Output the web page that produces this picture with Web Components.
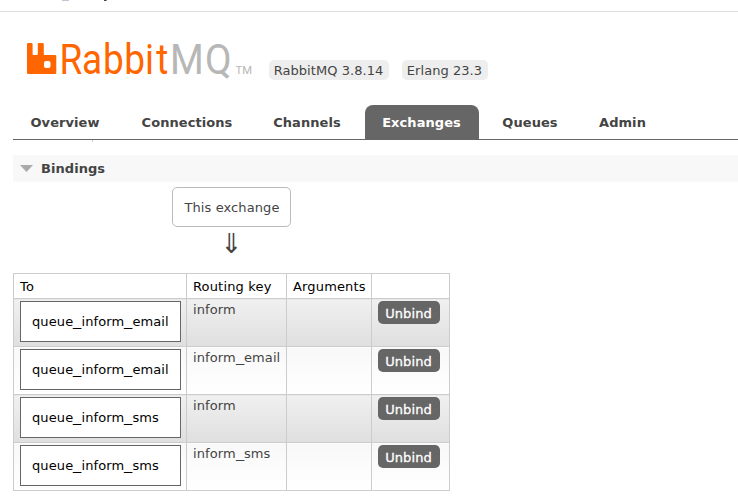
<!DOCTYPE html>
<html lang="en">
<head>
<meta charset="utf-8">
<title>RabbitMQ Management</title>
<style>
html,body{margin:0;background:#fff;overflow:hidden}
body{width:738px;height:501px;font:13px/17px "DejaVu Sans",sans-serif;color:#444}
</style>
</head>
<body>
<rmq-page></rmq-page>
<script>
const define = (name, html) => customElements.define(name, class extends HTMLElement {
  constructor() {
    super();
    this.attachShadow({mode: 'open'}).innerHTML = html;
  }
});

// Letter positions in page units, converted to the condensed coordinate system of the wordmark.
const xs = (scale, list) => list.map(x => (x / scale).toFixed(2)).join(' ');

define('rmq-logo', `
<style>:host{display:block;width:227px;height:64px}svg{display:block}</style>
<svg width="227" height="64" viewBox="26 26 227 64">
  <path fill="#f60" d="M28.300 43h3q1.300 0 1.300 1.300V54q0 1 1 1h3.200q1 0 1-1v-9.700q0-1.300 1.300-1.300h3.400q1.300 0 1.300 1.300V54q0 1 1 1h10.200q1.300 0 1.300 1.300V72.700q0 1.300-1.300 1.300H28.300q-1.300 0-1.300-1.300V44.300q0-1.300 1.300-1.300z"/>
  <rect x="44" y="61" width="6.500" height="7" rx="2" fill="#fff"/>
  <g font-family="Roboto, sans-serif" font-size="43">
    <text transform="scale(.86 1)" x="${xs(.86, [59.6, 82.1, 102.9, 124.2, 145, 156.2])}" y="73.700" fill="#f60">Rabbit</text>
    <text transform="scale(.9 1)" x="${xs(.9, [169.9, 205])}" y="73.700" fill="#b7b7b7">MQ</text>
  </g>
  <text x="235.500" y="73.700" fill="#b7b7b7" font-family="Roboto, sans-serif" font-size="11.500" textLength="16.500" lengthAdjust="spacingAndGlyphs">TM</text>
</svg>`);

define('rmq-tag', `
<style>:host{display:flex;align-items:center;justify-content:center;box-sizing:border-box;height:20px;padding-right:1px;border-radius:5px;background:#eee;letter-spacing:.05px;white-space:nowrap}</style><slot></slot>`);

define('rmq-tab', `
<style>:host{display:flex;box-sizing:border-box;justify-content:center;height:34px;padding:9px 1px 0 0;border-radius:8px 8px 0 0;font-weight:bold;letter-spacing:.06px;white-space:nowrap}
:host([active]){background:#666;color:#fff}</style><slot></slot>`);

define('rmq-tabs', `
<style>:host{display:grid;grid-template-columns:105px 125px 101px 114px 89px 82px;column-gap:7px;border-bottom:1px solid #666}</style><slot></slot>`);

define('rmq-heading', `
<style>:host{display:flex;align-items:center;gap:8px;box-sizing:border-box;height:27px;padding-left:7px;background:#f8f8f8;font-weight:bold;letter-spacing:.06px}svg{display:block}</style>
<svg width="13" height="7"><path d="M0 0h13L6.500 7z" fill="#aaa"/></svg><slot></slot>`);

define('rmq-exchange', `
<style>:host{display:flex;align-items:center;justify-content:center;box-sizing:border-box;width:119px;height:40px;border:1px solid #bbb;border-radius:5px;letter-spacing:.1px;padding:1px 0 0 1px}</style><slot></slot>`);

define('rmq-queue', `
<style>:host{display:flex;align-items:center;box-sizing:border-box;width:161px;height:41px;padding-left:11px;border:1px solid #666;background:#fff;color:#000}</style><div><slot></slot></div>`);

define('rmq-button', `
<style>:host{display:flex;align-items:center;justify-content:center;box-sizing:border-box;width:62px;height:23px;padding:2px 1px 0 0;border-radius:5px;background:#666;color:#fff;-webkit-text-stroke:.3px #fff}</style><slot></slot>`);

const rows = [['queue_inform_email', 'inform'], ['queue_inform_email', 'inform_email'],
              ['queue_inform_sms', 'inform'], ['queue_inform_sms', 'inform_sms']];
const name = text => text.replaceAll('_', '<span class="u">_</span>');
define('rmq-bindings', `
<style>
:host{display:block;width:437px}
table{border-collapse:collapse;table-layout:fixed;width:437px;letter-spacing:.1px;white-space:nowrap}
th,td{border:1px solid #ccc;padding:2px 6px 0;text-align:left;vertical-align:top;box-sizing:border-box}
th{font-weight:normal;color:#000;height:25px;padding-top:4px;letter-spacing:.16px}
td{height:48px}
.u{display:inline-block;margin-right:1.600px;transform:scaleX(1.260);transform-origin:0 0}
tbody tr:nth-child(odd) td{background:linear-gradient(#f0f0f0,#dfdfdf)}
tbody tr:nth-child(even) td{background:linear-gradient(#f8f8f8,#fff)}
</style>
<table>
<colgroup><col style="width:173px"><col style="width:100px"><col style="width:85px"><col style="width:78px"></colgroup>
<thead><tr><th>To</th><th>Routing key</th><th>Arguments</th><th></th></tr></thead>
<tbody>${rows.map(([q, k]) => `<tr><td><rmq-queue>${name(q)}</rmq-queue></td><td>${name(k)}</td><td></td><td><rmq-button>Unbind</rmq-button></td></tr>`).join('')}</tbody>
</table>`);

define('rmq-page', `
<style>
:host{display:block;box-sizing:border-box;height:501px}
.top{height:11px;border-bottom:1px solid #ddd}
.top svg{display:block}
header{display:flex;align-items:flex-start;padding:14px 0 0 26px;height:51px}
.tags{display:flex;gap:13px;padding:34px 0 0 16px}
rmq-tabs{margin:28px 0 0 13px}
.tick{width:1px;height:2px;margin-left:92px;background:#ccc}
rmq-heading{margin:13px 0 0 13px}
.flow{display:flex;flex-direction:column;align-items:center;width:119px;margin:5px 0 0 172px;height:86px}
.arrow{font-size:26px;line-height:32px;transform:scaleY(1.060)}
rmq-bindings{margin-left:13px}
</style>
<div class="top"><svg width="120" height="2"><path d="M62 0h7v1h-7z" fill="#c5c5d5"/><path d="M104 0h2v1h-2z" fill="#445"/><path d="M106 0h1v1h-1z" fill="#c84"/></svg></div>
<header><rmq-logo></rmq-logo><div class="tags"><rmq-tag style="width:120px">RabbitMQ 3.8.14</rmq-tag><rmq-tag style="width:86px">Erlang 23.3</rmq-tag></div></header>
<rmq-tabs><rmq-tab>Overview</rmq-tab><rmq-tab>Connections</rmq-tab><rmq-tab>Channels</rmq-tab><rmq-tab active>Exchanges</rmq-tab><rmq-tab>Queues</rmq-tab><rmq-tab>Admin</rmq-tab></rmq-tabs>
<div class="tick"></div>
<rmq-heading>Bindings</rmq-heading>
<div class="flow"><rmq-exchange>This exchange</rmq-exchange><span class="arrow">⇓</span></div>
<rmq-bindings></rmq-bindings>`);
</script>
</body>
</html>
